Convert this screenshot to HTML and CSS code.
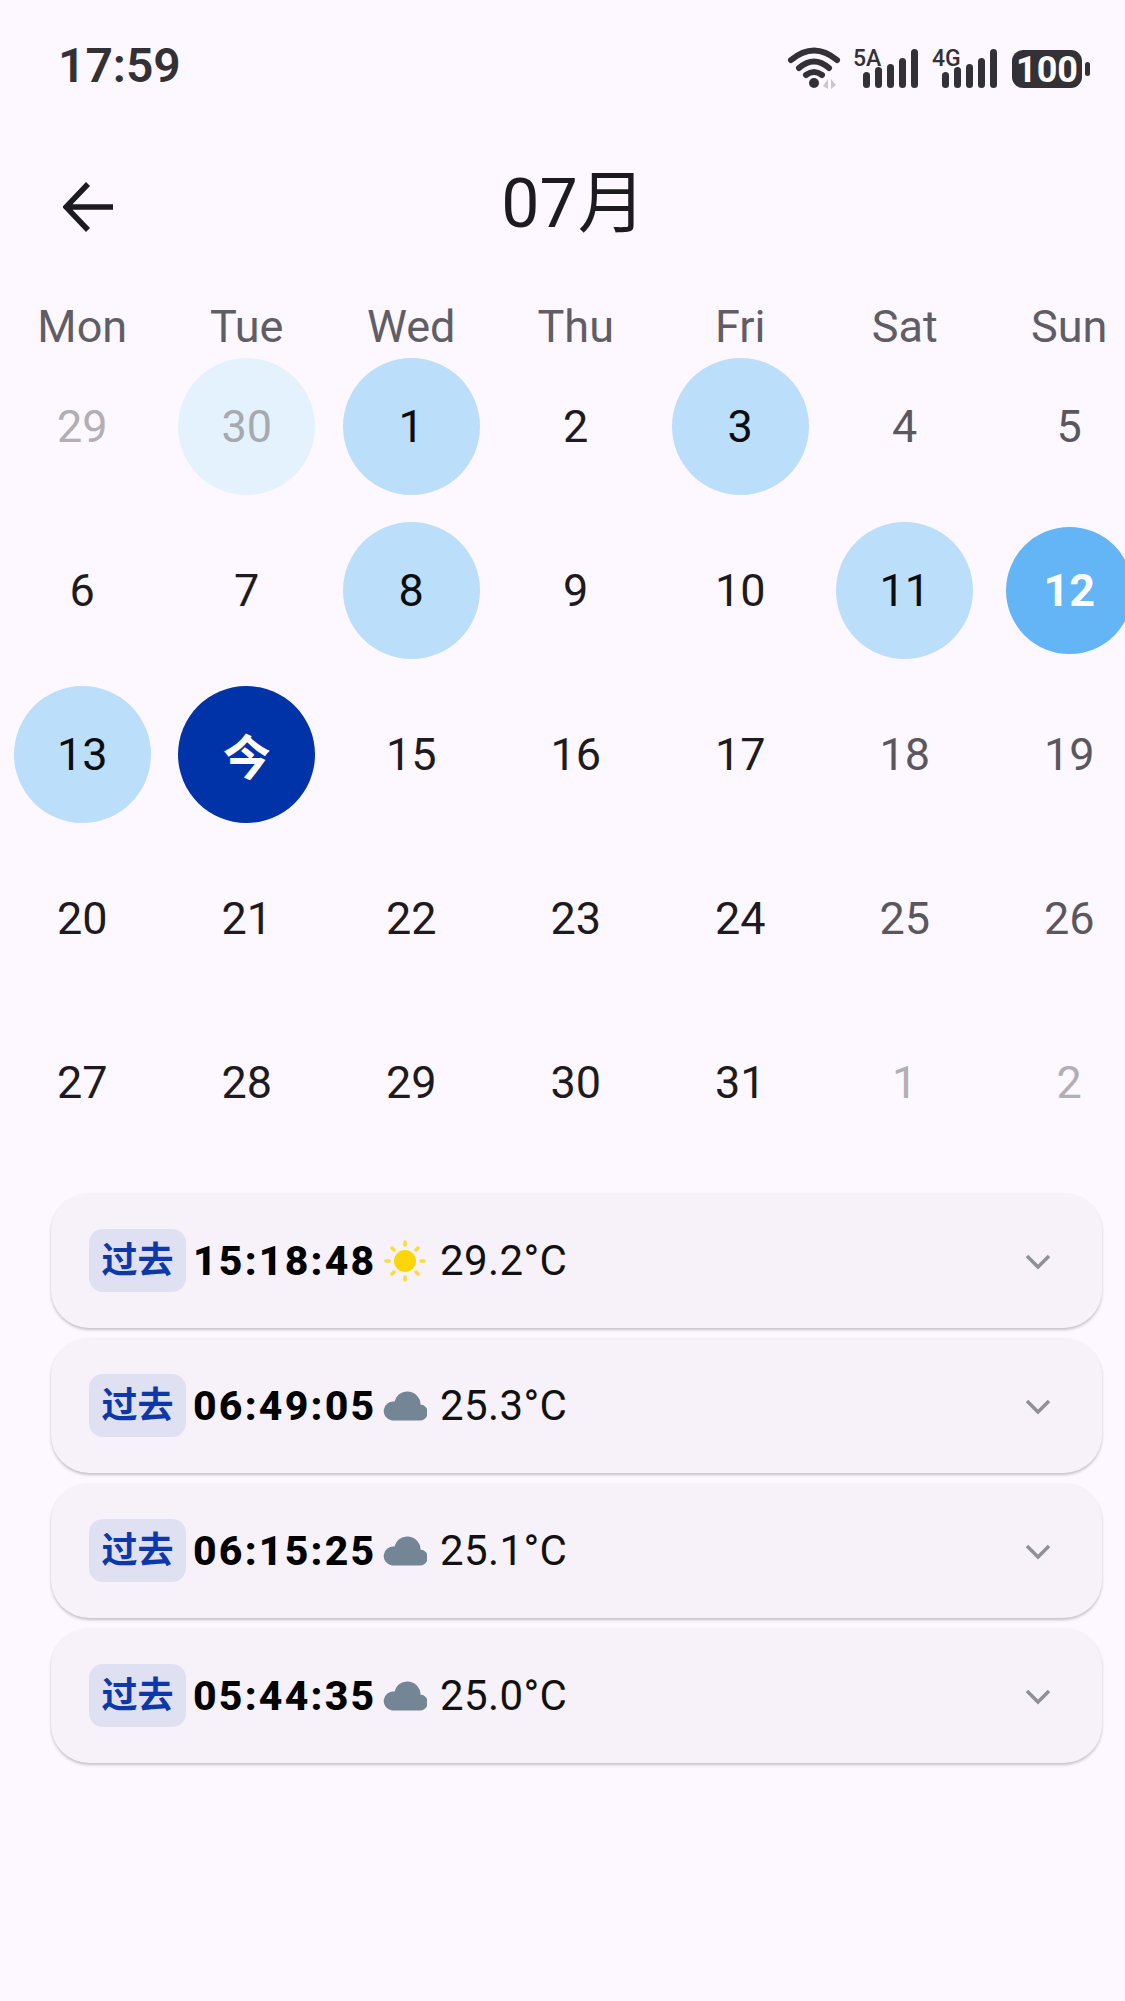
FILE: index.html
```html
<!DOCTYPE html>
<html lang="zh">
<head>
<meta charset="utf-8">
<title>07月</title>
<link rel="stylesheet" href="styles.css">
</head>
<body>
<div class="page">
  <div class="status">
    <span class="clock">17:59</span>
    <svg class="status-icons" width="310" height="46" viewBox="0 0 310 46">
      <g fill="none" stroke="#333135" stroke-width="6" stroke-linecap="round">
        <path d="M6 15 Q29 -4 52 15"/>
        <path d="M14 23 Q29 10 44 23"/>
        <path d="M21 30 Q29 24 37 30"/>
      </g>
      <circle cx="29" cy="38" r="5" fill="#333135"/>
      <path d="M43 34v10l-5-3zM46 34v10l5-4z" fill="#c9c7cb"/>
      <text class="net" x="68" y="21">5A</text>
      <g fill="#333135">
        <rect x="78" y="27" width="7" height="16" rx="3.5"/>
        <rect x="90" y="22" width="7" height="21" rx="3.5"/>
        <rect x="102" y="19" width="7" height="24" rx="3.5"/>
        <rect x="114" y="13" width="7" height="30" rx="3.5"/>
        <rect x="126" y="4" width="7" height="39" rx="3.5"/>
      </g>
      <text class="net" x="147" y="21">4G</text>
      <g fill="#333135">
        <rect x="157" y="27" width="7" height="16" rx="3.5"/>
        <rect x="169" y="22" width="7" height="21" rx="3.5"/>
        <rect x="181" y="19" width="7" height="24" rx="3.5"/>
        <rect x="193" y="13" width="7" height="30" rx="3.5"/>
        <rect x="205" y="4" width="7" height="39" rx="3.5"/>
      </g>
      <rect x="227" y="5" width="70" height="38" rx="11" fill="#333135"/>
      <rect x="300" y="17" width="5" height="14" rx="2.5" fill="#333135"/>
      <text class="batt" x="262" y="37" text-anchor="middle">100</text>
    </svg>
  </div>

  <div class="topbar">
    <svg class="back" width="50" height="50" viewBox="0 0 50 50">
      <path d="M50 25H5M25 2 3 25l22 23" fill="none" stroke="#1d1b20" stroke-width="5.5"/>
    </svg>
    <h1 class="title">07月</h1>
  </div>

  <div class="weekdays">
    <span>Mon</span><span>Tue</span><span>Wed</span><span>Thu</span><span>Fri</span><span>Sat</span><span>Sun</span>
  </div>

  <div class="days">
    <div class="cell muted"><span class="num">29</span></div>
    <div class="cell muted"><span class="num pale">30</span></div>
    <div class="cell"><span class="num mark">1</span></div>
    <div class="cell"><span class="num">2</span></div>
    <div class="cell"><span class="num mark">3</span></div>
    <div class="cell weekend"><span class="num">4</span></div>
    <div class="cell weekend"><span class="num">5</span></div>

    <div class="cell"><span class="num">6</span></div>
    <div class="cell"><span class="num">7</span></div>
    <div class="cell"><span class="num mark">8</span></div>
    <div class="cell"><span class="num">9</span></div>
    <div class="cell"><span class="num">10</span></div>
    <div class="cell"><span class="num mark">11</span></div>
    <div class="cell"><span class="num selected">12</span></div>

    <div class="cell"><span class="num mark">13</span></div>
    <div class="cell"><span class="num today">今</span></div>
    <div class="cell"><span class="num">15</span></div>
    <div class="cell"><span class="num">16</span></div>
    <div class="cell"><span class="num">17</span></div>
    <div class="cell weekend"><span class="num">18</span></div>
    <div class="cell weekend"><span class="num">19</span></div>

    <div class="cell"><span class="num">20</span></div>
    <div class="cell"><span class="num">21</span></div>
    <div class="cell"><span class="num">22</span></div>
    <div class="cell"><span class="num">23</span></div>
    <div class="cell"><span class="num">24</span></div>
    <div class="cell weekend"><span class="num">25</span></div>
    <div class="cell weekend"><span class="num">26</span></div>

    <div class="cell"><span class="num">27</span></div>
    <div class="cell"><span class="num">28</span></div>
    <div class="cell"><span class="num">29</span></div>
    <div class="cell"><span class="num">30</span></div>
    <div class="cell"><span class="num">31</span></div>
    <div class="cell muted"><span class="num">1</span></div>
    <div class="cell muted"><span class="num">2</span></div>
  </div>

  <div class="records">
    <div class="card">
      <span class="tag">过去</span>
      <span class="time">15:18:48</span>
      <svg class="weather" width="44" height="44" viewBox="0 0 44 44">
        <circle cx="22" cy="22" r="11" fill="#fdd60a"/>
        <g stroke="#fdd60a" stroke-width="3.5" stroke-linecap="round" opacity=".8">
          <path d="M22 3v3M22 38v3M3 22h3M38 22h3M9 9l2 2M33 33l2 2M35 9l-2 2M11 33l-2 2"/>
        </g>
      </svg>
      <span class="temp">29.2°C</span>
      <svg class="chev" width="26" height="18" viewBox="0 0 26 18"><path d="M2 3l11 11L24 3" fill="none" stroke="#919096" stroke-width="3.5"/></svg>
    </div>
    <div class="card">
      <span class="tag">过去</span>
      <span class="time">06:49:05</span>
      <svg class="weather" width="44" height="44" viewBox="0 0 44 44">
        <path d="M9 36.5h27a8 8 0 0 0 1.5-16A13 13 0 0 0 24 7.5a13 13 0 0 0-12.5 10A9.5 9.5 0 0 0 9 36.5z" fill="#748596"/>
      </svg>
      <span class="temp">25.3°C</span>
      <svg class="chev" width="26" height="18" viewBox="0 0 26 18"><path d="M2 3l11 11L24 3" fill="none" stroke="#919096" stroke-width="3.5"/></svg>
    </div>
    <div class="card">
      <span class="tag">过去</span>
      <span class="time">06:15:25</span>
      <svg class="weather" width="44" height="44" viewBox="0 0 44 44">
        <path d="M9 36.5h27a8 8 0 0 0 1.5-16A13 13 0 0 0 24 7.5a13 13 0 0 0-12.5 10A9.5 9.5 0 0 0 9 36.5z" fill="#748596"/>
      </svg>
      <span class="temp">25.1°C</span>
      <svg class="chev" width="26" height="18" viewBox="0 0 26 18"><path d="M2 3l11 11L24 3" fill="none" stroke="#919096" stroke-width="3.5"/></svg>
    </div>
    <div class="card">
      <span class="tag">过去</span>
      <span class="time">05:44:35</span>
      <svg class="weather" width="44" height="44" viewBox="0 0 44 44">
        <path d="M9 36.5h27a8 8 0 0 0 1.5-16A13 13 0 0 0 24 7.5a13 13 0 0 0-12.5 10A9.5 9.5 0 0 0 9 36.5z" fill="#748596"/>
      </svg>
      <span class="temp">25.0°C</span>
      <svg class="chev" width="26" height="18" viewBox="0 0 26 18"><path d="M2 3l11 11L24 3" fill="none" stroke="#919096" stroke-width="3.5"/></svg>
    </div>
  </div>
</div>
</body>
</html>
```
FILE: styles.css
```css
* { box-sizing: border-box; }
html, body { margin: 0; height: 100%; }
body {
  background: #fdf7ff;
  font-family: Roboto, "Noto Sans CJK SC", sans-serif;
  color: #1d1b20;
  overflow: hidden;
}
.page { width: 1125px; height: 2001px; overflow: hidden; }

.status {
  height: 130px;
  padding: 43px 30px 0 58px;
  display: flex;
  justify-content: space-between;
  align-items: flex-start;
}
.clock { font-size: 48px; line-height: 46px; font-weight: 600; color: #333135; }
.status-icons { display: block; margin-top: 2px; }
.net { font: 500 23px Roboto, sans-serif; fill: #333135; }
.batt { font: 700 36px Roboto, sans-serif; fill: #fff; }

.topbar {
  height: 130px;
  position: relative;
  display: flex;
  align-items: center;
  justify-content: center;
  padding: 18px 0 0 22px;
}
.back { position: absolute; left: 63px; top: 52px; }
.title { margin: 0; font-size: 68px; font-weight: 400; line-height: 1; }

.weekdays {
  width: 1152px;
  height: 84px;
  display: grid;
  grid-template-columns: repeat(7, 164.5px);
  justify-items: center;
  align-items: start;
  padding-top: 42px;
  font-size: 45px;
  font-weight: 400;
  line-height: 50px;
  color: #5f5d65;
}

.days {
  width: 1152px;
  display: grid;
  grid-template-columns: repeat(7, 164.5px);
  grid-auto-rows: 164px;
  font-size: 45px;
  font-weight: 400;
}
.cell { display: flex; align-items: center; justify-content: center; color: #1d1b20; }
.cell.weekend { color: #5a585e; }
.cell.muted { color: #b1afb5; }
.num {
  width: 137px;
  height: 137px;
  border-radius: 50%;
  display: flex;
  align-items: center;
  justify-content: center;
}
.mark { background: #bbdefb; color: #0d0d10; }
.pale { background: #e3f2fd; color: #a6a9ad; }
.selected { width: 127px; height: 127px; background: #64b5f6; color: #fff; font-weight: 700; }
.today { background: #0033a8; color: #fff; font-weight: 700; font-size: 48px; }

.records {
  margin: 29px 23px 0 51px;
  display: flex;
  flex-direction: column;
  gap: 10px;
}
.card {
  height: 135px;
  border-radius: 38px;
  background: #f7f2fa;
  box-shadow: 0 2px 3px rgba(0, 0, 0, .22);
  display: flex;
  align-items: center;
  padding: 0 51px 0 38px;
}
.tag {
  width: 97px;
  height: 63px;
  border-radius: 14px;
  background: #dfe0f2;
  color: #0d39a8;
  font-size: 36px;
  line-height: 64px;
  font-weight: 700;
  display: flex;
  align-items: flex-start;
  justify-content: center;
}
.time { margin-left: 7px; font-size: 41px; font-weight: 800; color: #000; letter-spacing: 2.2px; width: 184px; white-space: nowrap; }
.weather { margin-left: 6px; }
.temp { margin-left: 13px; font-size: 42px; font-weight: 400; color: #111; letter-spacing: .4px; white-space: nowrap; }
.chev { margin-left: auto; position: relative; top: 1px; }
```
